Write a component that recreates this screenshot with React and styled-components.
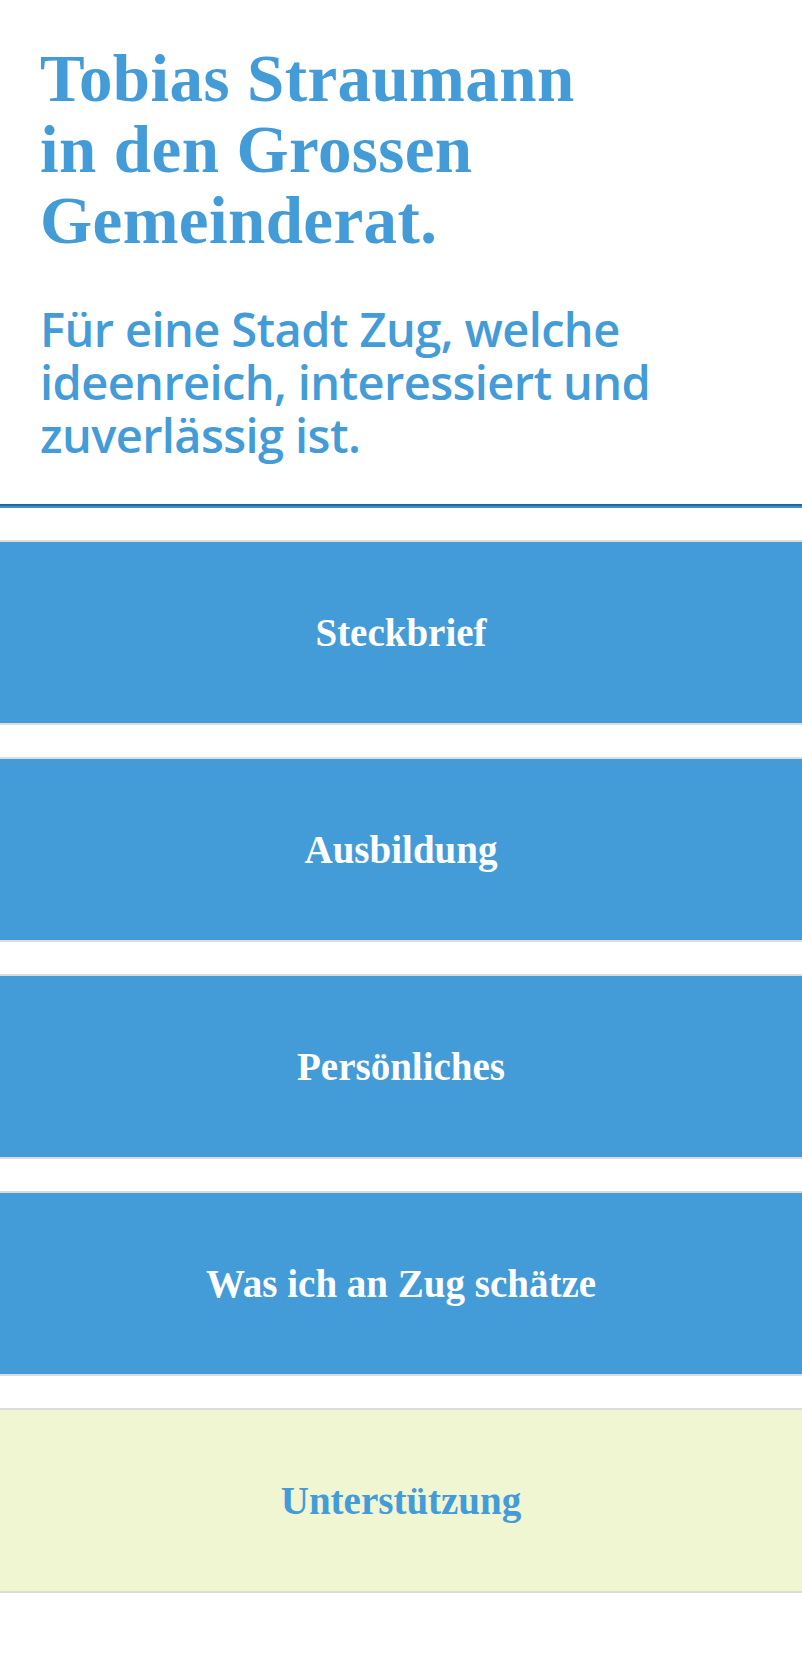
import styled, { createGlobalStyle } from "styled-components";

const GlobalStyle = createGlobalStyle`
  html, body {
    margin: 0;
    padding: 0;
    background: #fff;
  }
`;

const Page = styled.div`
  width: 100%;
  min-height: 1666px;
  background: #fff;
`;

const Header = styled.header`
  padding: 43px 40px 0;
`;

const Title = styled.h1`
  margin: 0;
  font-family: "Liberation Serif", serif;
  font-weight: bold;
  font-size: 67px;
  line-height: 71px;
  letter-spacing: 0.4px;
  color: #439cd8;
`;

const Subtitle = styled.p`
  margin: 47px 0 0;
  font-family: "Open Sans", sans-serif;
  font-weight: 600;
  font-size: 47px;
  line-height: 53px;
  letter-spacing: -0.6px;
  color: #439cd8;
`;

const Divider = styled.hr`
  margin: 42px 0 0;
  height: 0;
  border: none;
  border-top: 2px solid #1f6a9b;
  border-bottom: 2px solid #3a93d0;
`;

const Menu = styled.nav`
  display: flex;
  flex-direction: column;
  gap: 32px;
  padding-top: 32px;
`;

const MenuButton = styled.a`
  display: flex;
  align-items: center;
  justify-content: center;
  height: 181px;
  border-top: 2px solid #dcdcdc;
  border-bottom: 2px solid #dcdcdc;
  background: ${(p) => (p.$highlight ? "#f0f5d2" : "#439cd8")};
  color: ${(p) => (p.$highlight ? "#439cd8" : "#fff")};
  font-family: "Liberation Serif", serif;
  font-weight: bold;
  font-size: 39px;
  text-decoration: none;
`;

const items = [
  { label: "Steckbrief" },
  { label: "Ausbildung" },
  { label: "Persönliches" },
  { label: "Was ich an Zug schätze" },
  { label: "Unterstützung", highlight: true },
];

export default function App() {
  return (
    <Page>
      <GlobalStyle />
      <Header>
        <Title>
          Tobias Straumann
          <br />
          in den Grossen
          <br />
          Gemeinderat.
        </Title>
        <Subtitle>
          Für eine Stadt Zug, welche
          <br />
          ideenreich, interessiert und
          <br />
          zuverlässig ist.
        </Subtitle>
      </Header>
      <Divider />
      <Menu>
        {items.map((it) => (
          <MenuButton key={it.label} href="#" $highlight={it.highlight}>
            {it.label}
          </MenuButton>
        ))}
      </Menu>
    </Page>
  );
}
